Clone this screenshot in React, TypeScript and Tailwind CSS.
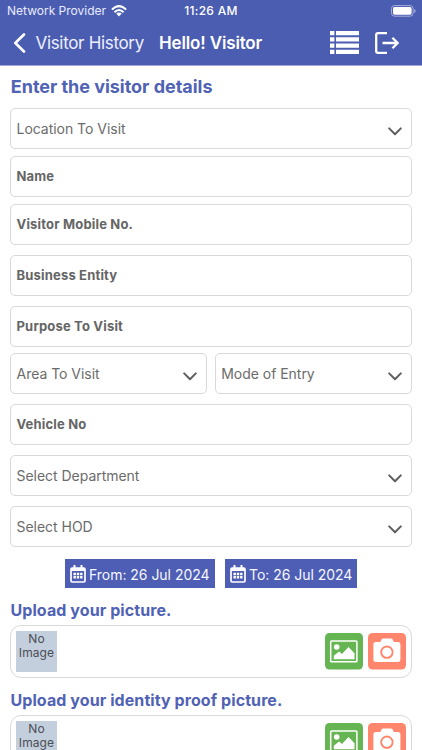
import React from "react";

function Chevron() {
  return (
    <svg className="mt-[5px] h-[9px] w-[14px] shrink-0" viewBox="0 0 14 9" fill="none" stroke="#5e5e5e" strokeWidth="2" strokeLinecap="round" strokeLinejoin="round">
      <path d="M1.200 1.400 7 7.200 12.800 1.400" />
    </svg>
  );
}

function Select({ label, className = "" }: { label: string; className?: string }) {
  return (
    <div className={`flex h-[41px] items-center justify-between rounded-[5px] border border-[#d9d9d9] pl-[5.500px] pr-[8.600px] text-[14px] tracking-[-0.030px] text-[#6b6b6b] ${className}`}>
      <span className="whitespace-nowrap">{label}</span>
      <Chevron />
    </div>
  );
}

function Input({ label, className = "" }: { label: string; className?: string }) {
  return (
    <div className={`flex h-[41px] items-center rounded-[5px] border border-[#d9d9d9] pl-[5.500px] text-[13px] font-bold tracking-[0.180px] text-[#656565] ${className}`}>
      <span className="whitespace-nowrap">{label}</span>
    </div>
  );
}

function Calendar() {
  return (
    <svg className="h-[18px] w-[16px] shrink-0" viewBox="0 0 16 18" fill="none">
      <rect x="1" y="3" width="14" height="14" rx="1.2" stroke="#fff" strokeWidth="1.7" />
      <path d="M1 3h14v3H1z" fill="#fff" />
      <path d="M4.500 0v4M11.500 0v4" stroke="#fff" strokeWidth="2" />
      <path d="M3.500 9h9M3.500 12.300h9" stroke="#fff" strokeWidth="2.400" strokeDasharray="2.400 .9" />
    </svg>
  );
}

function DateChip({ label, className = "" }: { label: string; className?: string }) {
  return (
    <div className={`flex h-[29px] items-center bg-[#4d5eb4] pl-[5px] text-[14px] tracking-[-0.030px] text-[#f6f7ff] ${className}`}>
      <Calendar />
      <span className="ml-[3px] mt-[2px] whitespace-nowrap">{label}</span>
    </div>
  );
}

function Upload() {
  return (
    <div className="flex h-[53px] items-start rounded-[11px] border border-[#d9d9d9] pl-[5px] pr-[5px]">
      <div className="mt-[5px] h-[41px] w-[41px] bg-[#c4cfde] pt-[.6px] text-center text-[12px] leading-[14.500px] tracking-[0.1px] text-[#4b4e54]">
        No
        <br />
        Image
      </div>
      <div className="ml-auto mt-[7px] flex gap-[5px]">
        <svg className="h-[37px] w-[38px]" viewBox="0 0 38 37">
          <rect width="38" height="36.500" rx="4.500" fill="#66b553" />
          <rect x="5.700" y="8" width="26.200" height="20.800" rx=".8" fill="none" stroke="#fff" strokeWidth="1.500" />
          <circle cx="11.700" cy="14" r="2.800" fill="#fff" />
          <path d="M8.800 26.200v-3.400l5.300-4.400 2.900 2.700 6.500-7.200 6 6.400v5.900z" fill="#fff" />
        </svg>
        <svg className="h-[37px] w-[38px]" viewBox="0 0 38 37">
          <rect width="38" height="36.500" rx="4.500" fill="#ff866d" />
          <path d="M8 8.900h4.400l1-2.100q.6-1.200 1.800-1.200h7.800q1.200 0 1.800 1.200l1 2.100H30q2.400 0 2.400 2.400v15.300q0 2.500-2.400 2.500H8q-2.600 0-2.600-2.500V11.300Q5.400 8.900 8 8.900z" fill="#fff" />
          <circle cx="18.900" cy="19.200" r="5.700" fill="none" stroke="#ff866d" strokeWidth="1.900" />
        </svg>
      </div>
    </div>
  );
}

export default function App() {
  return (
    <div className="h-[750px] w-[422px] overflow-hidden bg-white font-['Inter',sans-serif]">
      <header className="h-[66px] border-b border-[#9da5d4] bg-[#4b5db1] text-white">
        <div className="grid h-[22px] grid-cols-3 items-center text-[12px]">
          <div className="flex items-center gap-[5px] pl-[7px]">
            <span className="w-[99px] whitespace-nowrap text-[#e8ebff]">Network Provider</span>
            <svg className="h-[12px] w-[16px] shrink-0" viewBox="0 0 16 12">
              <path d="M.9 4.600Q8-2.300 15.100 4.600M3.400 7.200Q8 2.800 12.600 7.200" fill="none" stroke="#fff" strokeWidth="2" />
              <path d="M5.300 8.600Q8 6.300 10.700 8.600L8 11.400z" fill="#fff" />
            </svg>
          </div>
          <span className="text-center font-medium tracking-[0.3px]">11:26 AM</span>
          <svg className="ml-auto mr-[6px] h-[12px] w-[25px]" viewBox="0 0 25 12">
            <rect x=".5" y=".6" width="21.600" height="10.600" rx="3" fill="none" stroke="#a7aedb" />
            <rect x="2" y="2.100" width="18.600" height="7.600" rx="1.600" fill="#fff" />
            <path d="M23.200 4q1.400.4 1.400 2t-1.400 2z" fill="#a7aedb" />
          </svg>
        </div>
        <div className="flex h-[43px] items-center">
          <svg className="-mt-[2px] ml-[13px] h-[20px] w-[13px] shrink-0" viewBox="0 0 13 20" fill="none" stroke="#fff" strokeWidth="2.600" strokeLinecap="round" strokeLinejoin="round">
            <path d="M11 1.500 2.300 10 11 18.500" />
          </svg>
          <span className="ml-[9.500px] w-[108px] whitespace-nowrap text-[17px] tracking-[-0.320px] text-[#eef0ff]">Visitor History</span>
          <span className="ml-[15.500px] whitespace-nowrap text-[17px] font-semibold tracking-[-0.150px]">Hello! Visitor</span>
          <svg className="-mt-[2px] ml-auto h-[23px] w-[29px] shrink-0" viewBox="0 0 29 23" fill="#fff">
            <path d="M0 0h4.400v4.200H0zM6 0h23v4.200H6zM0 6.200h4.400v4.200H0zM6 6.200h23v4.200H6zM0 12.500h4.400v4.200H0zM6 12.500h23v4.200H6zM0 18.700h4.400v4.200H0zM6 18.700h23v4.200H6z" />
          </svg>
          <svg className="-mt-[1px] ml-[16px] mr-[23px] h-[22px] w-[24px] shrink-0" viewBox="0 0 24 22" fill="none" stroke="#fff" strokeWidth="2.300">
            <path d="M12 1.200H3Q1.200 1.200 1.200 3v16Q1.200 20.800 3 20.800h9M7.500 11h15M17.400 5.800 22.600 11l-5.200 5.200" />
          </svg>
        </div>
      </header>
      <main className="flex flex-col pl-[10px] pr-[10.500px]">
        <h1 className="ml-[.8px] mt-[8px] h-[26px] whitespace-nowrap text-[18px] font-bold leading-[26px] tracking-[-0.030px] text-[#5062b4]">Enter the visitor details</h1>
        <Select label="Location To Visit" className="mt-[8px]" />
        <Input label="Name" className="mt-[7px]" />
        <Input label="Visitor Mobile No." className="mt-[7px]" />
        <Input label="Business Entity" className="mt-[10px]" />
        <Input label="Purpose To Visit" className="mt-[10px]" />
        <div className="mt-[6px] flex gap-[8px]">
          <Select label="Area To Visit" className="flex-1" />
          <Select label="Mode of Entry" className="flex-1" />
        </div>
        <Input label="Vehicle No" className="mt-[10px]" />
        <Select label="Select Department" className="mt-[10px]" />
        <Select label="Select HOD" className="mt-[10px]" />
        <div className="ml-[.5px] mt-[12px] flex justify-center gap-[10px]">
          <DateChip label="From: 26 Jul 2024" className="w-[150px]" />
          <DateChip label="To: 26 Jul 2024" className="w-[132px]" />
        </div>
        <h2 className="ml-[.5px] mt-[10px] h-[24px] whitespace-nowrap text-[16px] font-bold leading-[24px] tracking-[0.080px] text-[#5062b4]">Upload your picture.</h2>
        <div className="mt-[3px]"><Upload /></div>
        <h2 className="ml-[.5px] mt-[10px] h-[24px] whitespace-nowrap text-[16px] font-bold leading-[24px] tracking-[0.080px] text-[#5062b4]">Upload your identity proof picture.</h2>
        <div className="mt-[3px]"><Upload /></div>
      </main>
    </div>
  );
}
